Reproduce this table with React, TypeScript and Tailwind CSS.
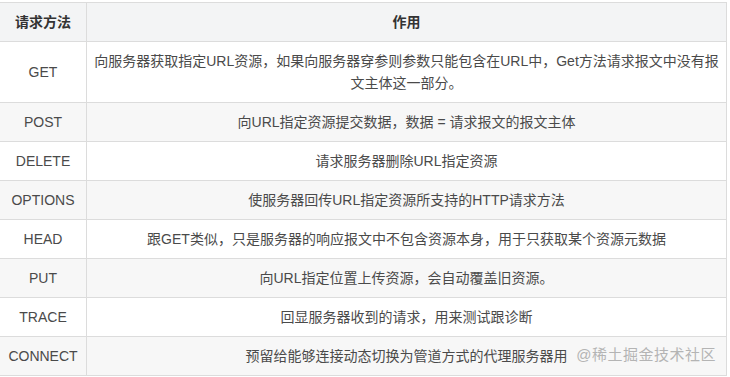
import React from 'react';

const rows: { method: string; desc: string }[] = [
  { method: 'GET', desc: '向服务器获取指定URL资源，如果向服务器穿参则参数只能包含在URL中，Get方法请求报文中没有报文主体这一部分。' },
  { method: 'POST', desc: '向URL指定资源提交数据，数据 = 请求报文的报文主体' },
  { method: 'DELETE', desc: '请求服务器删除URL指定资源' },
  { method: 'OPTIONS', desc: '使服务器回传URL指定资源所支持的HTTP请求方法' },
  { method: 'HEAD', desc: '跟GET类似，只是服务器的响应报文中不包含资源本身，用于只获取某个资源元数据' },
  { method: 'PUT', desc: '向URL指定位置上传资源，会自动覆盖旧资源。' },
  { method: 'TRACE', desc: '回显服务器收到的请求，用来测试跟诊断' },
  { method: 'CONNECT', desc: '预留给能够连接动态切换为管道方式的代理服务器用' },
];

const cell = 'border border-[#dcdcdc] py-2 text-center text-[14px] leading-[22px]';

const App: React.FC = () => {
  return (
    <div
      className="relative w-[730px] h-[377px] bg-white pt-[2px] overflow-hidden"
      style={{ fontFamily: '"Liberation Sans", Arial, "Noto Sans CJK SC", sans-serif' }}
    >
      <table className="table-fixed border-collapse w-[728px] -ml-px">
        <thead>
          <tr className="bg-[#f3f4f5]">
            <th className={`${cell} px-[10px] w-[87px] font-bold text-[#333]`}>请求方法</th>
            <th className={`${cell} px-[2px] font-bold text-[#333]`}>作用</th>
          </tr>
        </thead>
        <tbody>
          {rows.map((r, i) => (
            <tr key={r.method} className={i % 2 === 1 ? 'bg-[#f7f7f7]' : 'bg-white'}>
              <td className={`${cell} px-[4px] text-[#4a4a4a]`}>{r.method}</td>
              <td className={`${cell} px-[2px] text-[#4a4a4a]`}>{r.desc}</td>
            </tr>
          ))}
        </tbody>
      </table>

      {/* watermark */}
      <div className="absolute right-[14px] bottom-[11px] text-[15px] leading-[22px] text-[#b4b4b4] tracking-[0.5px]">
        @稀土掘金技术社区
      </div>
    </div>
  );
};

export default App;
